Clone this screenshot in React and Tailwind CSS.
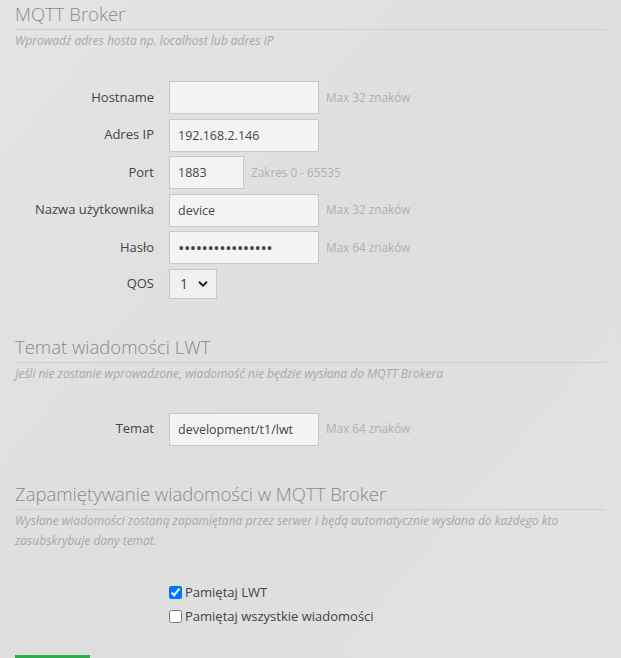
import { ChevronDown } from 'lucide-react';

function SectionHeader({ title, children }) {
  return (
    <div>
      <h2 className="text-[18.5px] leading-[28px] font-light text-[#8a8a8a] border-b border-[#cdcdcd] pb-[1px]">
        {title}
      </h2>
      <p className="mt-[1px] text-[12px] leading-[20px] italic text-[#a8a8a8]">{children}</p>
    </div>
  );
}

function Row({ label, hint, children }) {
  return (
    <div className="flex items-center">
      <label className="w-[155px] shrink-0 text-right text-[13px] text-[#444] pr-[1px]">{label}</label>
      <div className="ml-[14px] flex items-center">
        {children}
        {hint && <span className="ml-[7px] text-[11.75px] text-[#b0b0b0]">{hint}</span>}
      </div>
    </div>
  );
}

function Field({ value, width = 'w-[150px]', className = 'text-[12.5px]' }) {
  return (
    <input
      type="text"
      readOnly
      value={value}
      className={`${width} ${className} h-[33px] border border-[#c8c8c8] bg-[#f4f4f4] px-[8px] text-[#444] outline-none`}
    />
  );
}

export default function App() {
  return (
    <div
      className="min-h-[658px] w-full overflow-hidden bg-gradient-to-br from-[#e4e4e4] via-[#dedede] to-[#e3e3e3] px-[15px] pb-10"
      style={{ fontFamily: '"Open Sans", "Noto Sans", sans-serif' }}
    >
      <SectionHeader title="MQTT Broker">Wprowadź adres hosta np. localhost lub adres IP</SectionHeader>

      <div className="mt-[30px] flex flex-col gap-[4.5px] -ml-[15px]">
        <Row label="Hostname" hint="Max 32 znaków">
          <Field value="" />
        </Row>
        <Row label="Adres IP">
          <Field value="192.168.2.146" />
        </Row>
        <Row label="Port" hint="Zakres 0 - 65535">
          <Field value="1883" width="w-[75px]" />
        </Row>
        <Row label="Nazwa użytkownika" hint="Max 32 znaków">
          <Field value="device" />
        </Row>
        <Row label="Hasło" hint="Max 64 znaków">
          <Field value="••••••••••••••••" className="text-[17px] tracking-[-0.5px] text-[#222]" />
        </Row>
        <Row label="QOS">
          <div className="flex h-[30px] w-[48px] items-center justify-between border border-[#c8c8c8] bg-[#f0f0f0] pl-[10px] pr-[6px] text-[14px] text-[#444]">
            <span>1</span>
            <ChevronDown className="h-[14px] w-[14px] text-[#222]" strokeWidth={3.2} />
          </div>
        </Row>
      </div>

      <div className="mt-[34px]">
        <SectionHeader title="Temat wiadomości LWT">
          Jeśli nie zostanie wprowadzone, wiadomość nie będzie wysłana do MQTT Brokera
        </SectionHeader>
      </div>

      <div className="mt-[29px] -ml-[15px]">
        <Row label="Temat" hint="Max 64 znaków">
          <Field value="development/t1/lwt" />
        </Row>
      </div>

      <div className="mt-[34px]">
        <SectionHeader title="Zapamiętywanie wiadomości w MQTT Broker">
          Wysłane wiadomości zostaną zapamiętana przez serwer i będą automatycznie wysłana do każdego kto
          zasubskrybuje dany temat.
        </SectionHeader>
      </div>

      <div className="mt-[32px] ml-[154px] flex flex-col gap-[4px] text-[13px] text-[#444]">
        <label className="flex h-[20px] items-center gap-[3px]">
          <input type="checkbox" defaultChecked className="h-[13px] w-[13px] accent-[#0075ff]" />
          Pamiętaj LWT
        </label>
        <label className="flex h-[20px] items-center gap-[3px]">
          <input type="checkbox" className="h-[13px] w-[13px]" />
          Pamiętaj wszystkie wiadomości
        </label>
      </div>

      <div className="mt-[28px] h-[36px] w-[75px] bg-[#2eab4a]" />
    </div>
  );
}
